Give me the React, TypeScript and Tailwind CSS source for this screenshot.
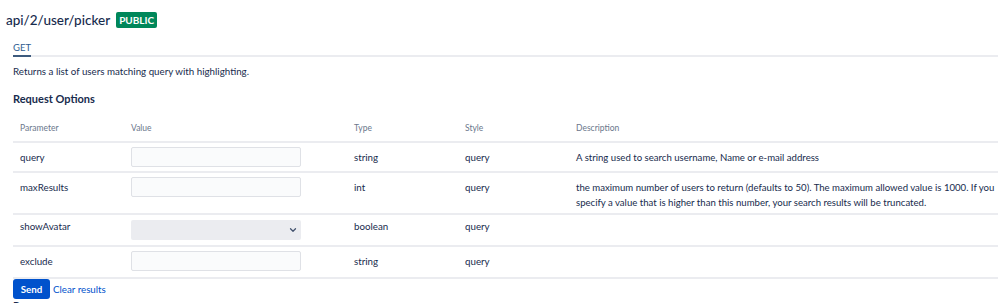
import { ChevronDown } from "lucide-react";

type Param = {
  name: string;
  type: string;
  style: string;
  description: string;
  select?: boolean;
  valuePad: string;
  textPad: string;
};

const params: Param[] = [
  {
    name: "query",
    type: "string",
    style: "query",
    description: "A string used to search username, Name or e-mail address",
    valuePad: "pt-[4px] pb-[4px]",
    textPad: "pt-[7px]",
  },
  {
    name: "maxResults",
    type: "int",
    style: "query",
    description:
      "the maximum number of users to return (defaults to 50). The maximum allowed value is 1000. If you specify a value that is higher than this number, your search results will be truncated.",
    valuePad: "pt-[4px] pb-[4px]",
    textPad: "pt-[7px]",
  },
  {
    name: "showAvatar",
    type: "boolean",
    style: "query",
    description: "",
    select: true,
    valuePad: "pt-[5px] pb-[5px]",
    textPad: "pt-[4px]",
  },
  {
    name: "exclude",
    type: "string",
    style: "query",
    description: "",
    valuePad: "pt-[4px] pb-[6px]",
    textPad: "pt-[7px]",
  },
];

export default function App() {
  return (
    <div className="w-[998px] h-[303px] overflow-hidden bg-white text-[#172b4d] font-['Lato','Open_Sans',sans-serif]">
      {/* title */}
      <div className="flex items-center gap-[6px] pl-[6px] pt-[10px] h-[30px]">
        <h1 className="text-[13.5px] leading-[20px] font-medium">api/2/user/picker</h1>
        <span className="bg-[#00875a] text-white text-[10px] font-bold leading-[16px] px-[3px] rounded-[2px]">
          PUBLIC
        </span>
      </div>

      {/* tabs */}
      <div className="w-[985px] ml-[13px] mt-[11px] border-b-2 border-[#ebecf0] flex">
        <span className="text-[9.5px] leading-[14px] text-[#2f5d91] border-b-2 border-[#3d5a7d] -mb-[2px]">
          GET
        </span>
      </div>

      <div className="pl-[13px] w-[1040px]">
        <p className="text-[9.75px] leading-[16px] mt-[6px]">
          Returns a list of users matching query with highlighting.
        </p>
        <h2 className="text-[11px] leading-[16px] font-bold mt-[12px]">Request Options</h2>

        <table className="mt-[14px] text-[9.75px] border-collapse table-fixed w-[1005px]">
          <colgroup>
            <col className="w-[118px]" />
            <col className="w-[223px]" />
            <col className="w-[111px]" />
            <col className="w-[111px]" />
            <col className="w-[442px]" />
          </colgroup>
          <thead>
            <tr className="text-[8.5px] text-[#6b778c] text-left">
              <th className="font-normal pl-[7px] pb-[6px] leading-[14px]">Parameter</th>
              <th className="font-normal p-0 pb-[6px] leading-[14px]">Value</th>
              <th className="font-normal p-0 pb-[6px] leading-[14px]">Type</th>
              <th className="font-normal p-0 pb-[6px] leading-[14px]">Style</th>
              <th className="font-normal p-0 pb-[6px] leading-[14px]">Description</th>
            </tr>
          </thead>
          <tbody>
            {params.map((p) => (
              <tr key={p.name} className="border-t-2 border-[#ebecf0] align-top">
                <td className={`pl-[7px] leading-[15px] ${p.textPad}`}>{p.name}</td>
                <td className={p.valuePad}>
                  {p.select ? (
                    <div className="w-[170px] h-[20px] bg-[#ebecf0] rounded-[2px] flex items-center justify-end pr-[3px]">
                      <ChevronDown size={10} strokeWidth={3} className="text-[#42526e]" />
                    </div>
                  ) : (
                    <input className="block w-[170px] h-[20px] bg-[#fafbfc] border border-[#dfe1e6] rounded-[2px] outline-none" />
                  )}
                </td>
                <td className={`leading-[15px] ${p.textPad}`}>{p.type}</td>
                <td className={`leading-[15px] ${p.textPad}`}>{p.style}</td>
                <td className={`pb-[3px] pr-[10px] leading-[15px] text-[9.6px] ${p.textPad}`}>
                  {p.description}
                </td>
              </tr>
            ))}
            <tr className="border-t-2 border-[#ebecf0]">
              <td colSpan={5} className="p-0" />
            </tr>
          </tbody>
        </table>

        <div className="flex items-center gap-[3px]">
          <button className="bg-[#0052cc] text-white text-[9.75px] font-bold h-[20px] w-[37px] rounded-[3px] leading-[20px]">
            Send
          </button>
          <span className="text-[9.75px] text-[#0052cc]">Clear results</span>
        </div>
        <h2 className="text-[11px] leading-[16px] font-bold -mt-[1px]">Response</h2>
      </div>
    </div>
  );
}
